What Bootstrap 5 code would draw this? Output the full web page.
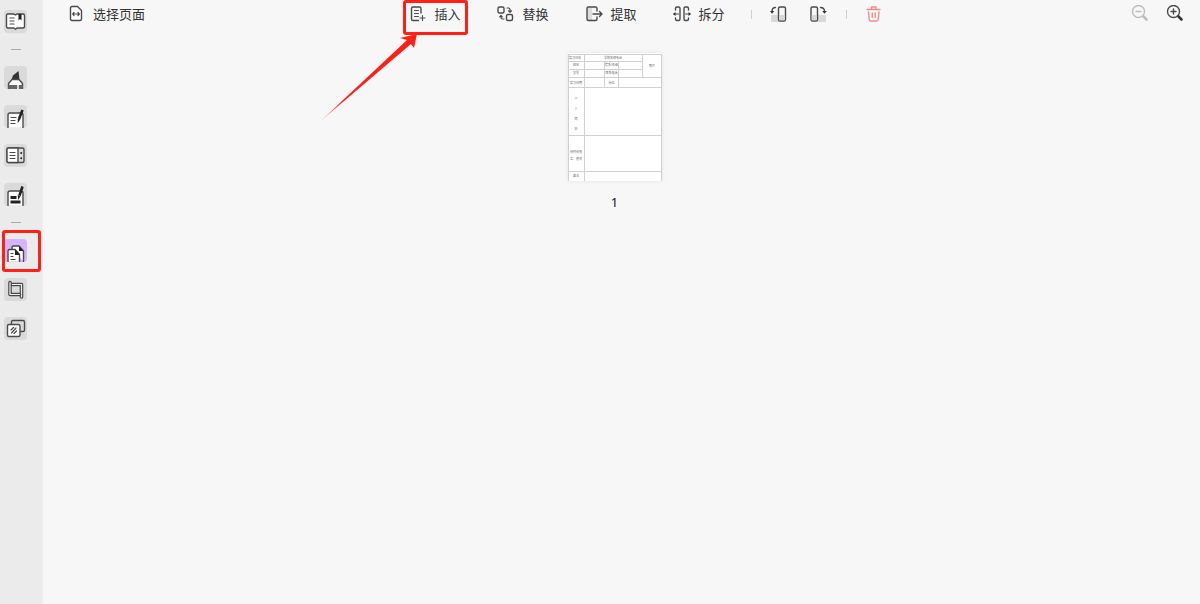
<!DOCTYPE html>
<html lang="zh-CN">
<head>
<meta charset="utf-8">
<meta name="viewport" content="width=device-width, initial-scale=1">
<title>页面管理</title>
<link href="https://cdn.jsdelivr.net/npm/bootstrap@5.3.0/dist/css/bootstrap.min.css" rel="stylesheet">
<style>
body { font-family: "Noto Sans", "Noto Sans CJK SC", sans-serif; background: #f7f7f7; color: #333; font-size: 13px; line-height: 20px; }
svg { display: block; fill: none; stroke: #4a4a4a; stroke-width: 1.4; stroke-linecap: round; stroke-linejoin: round; }
.rail { width: 43px; background: #ebebeb; padding: 10px 0 0 4px; gap: 16px; border-right: 1px solid #efefef; }
.rail button { width: 23px; height: 23px; background: #dadada; border: 0; border-radius: 4px; padding: 0; position: relative; }
.rail button.on { background: #d6b4fc; }
.rail hr { width: 10px; height: 1px; margin: 0 0 0 7px; border: 0; background: #aaa; opacity: 1; }
.bar { height: 28px; padding: 0 16px 0 26px; }
.side { flex: 1 1 0; }
.zooms { gap: 17px; }
.tools { gap: 36px; padding-left: 38px; }
.extra { gap: 18px; margin-left: -10px; }
.tool { position: relative; background: none; border: 0; padding: 0; color: #333; gap: 8px; white-space: nowrap; display: flex; align-items: center; }
.rule { width: 1px; height: 9px; background: #d0d0d0; }
.turn { margin-left: 4px; }
.ring { position: absolute; border: 3px solid #fe2015; border-radius: 3px; pointer-events: none; }
.ring-insert { left: -5px; top: -4px; width: 65px; height: 35px; }
.ring-pages { left: -2px; top: -9px; width: 39px; height: 42px; }
.arrow { position: absolute; left: -91px; top: 26px; pointer-events: none; }
.stage { padding: 25px 14px 0 0; }
.sheet { box-shadow: 0 0 4px #e2e2e2; }
.sheet text { font-size: 3px; fill: #666; stroke: none; text-anchor: middle; }
.danger { stroke: #f78a87; }
.dim { stroke: #bdbdbd; }
.num { margin-top: 11px; color: #111; }
</style>
<script src="https://cdn.jsdelivr.net/npm/bootstrap@5.3.0/dist/js/bootstrap.bundle.min.js"></script>
</head>
<body>
<div class="d-flex min-vh-100">
  <nav class="rail d-flex flex-column flex-shrink-0" aria-label="工具">
    <button type="button" aria-label="阅读"><svg width="23" height="23" viewBox="0 0 23 23"><path fill="#fff" d="M4 4h6l1.500 1 1.500-1h6q1.500 0 1.500 1.500v11q0 1.500-1.500 1.500h-6l-1.500 1.200L10 18H4q-1.500 0-1.500-1.500v-11Q2.500 4 4 4z"/><path stroke-width="1.200" d="M6 8h4M6 11h4M6 14h4"/><path fill="#222" stroke="none" d="M14.500 4h3v6.500L16 9l-1.500 1.500z"/></svg></button>
    <hr>
    <button type="button" aria-label="注释"><svg width="23" height="23" viewBox="0 0 23 23"><path fill="#fff" stroke="none" d="M4.500 23v-5.500l3.500-4h7l3.500 4V23z"/><path fill="#333" stroke="none" d="M7.500 13.500L9 9.500l5.500-4.500 1 8.500z"/><path d="M4.500 22.500v-5l3.500-4h7l3.500 4v5"/><path fill="#666" stroke="none" d="M4.500 19h14v4h-14z"/><path stroke="#fff" stroke-width="1.500" stroke-linecap="butt" d="M14 19v4"/></svg></button>
    <button type="button" aria-label="编辑"><svg width="23" height="23" viewBox="0 0 23 23"><path fill="#fff" d="M4 22.500V10q0-2 2-2h11q2 0 2 2v12.500"/><path stroke-width="1.200" d="M7 12.500h5M7 15.500h4M7 18.500h4"/><path stroke="#222" stroke-width="2.600" stroke-linecap="butt" d="M18.500 5l-3.500 9"/><path fill="#222" stroke="none" d="M13.800 13.500l2.500 1-2.600 3.500z"/></svg></button>
    <button type="button" aria-label="表单"><svg width="23" height="23" viewBox="0 0 23 23"><path fill="#ddd" d="M4.500 4h14q1.500 0 1.500 1.500v11.500q0 1.500-1.500 1.500h-14q-1.500 0-1.500-1.500V5.500q0-1.500 1.500-1.500z"/><path fill="#fff" d="M4.500 4H14v14.500H4.500Q3 18.500 3 17V5.500Q3 4 4.500 4z"/><path stroke-width="1.200" d="M6 8.500h5M6 11.500h5M6 14.500h5"/><path stroke="#222" stroke-width="2" d="M17.200 9v.1M17.200 14.200v.1"/></svg></button>
    <button type="button" aria-label="密文"><svg width="23" height="23" viewBox="0 0 23 23"><path fill="#fff" d="M4 22.500V10q0-2 2-2h11q2 0 2 2v12.500"/><path stroke="#222" stroke-width="2.800" stroke-linecap="butt" d="M6.500 14.500h6M6.500 19h10"/><path stroke="#222" stroke-width="2.600" stroke-linecap="butt" d="M18.500 3.500l-3 9"/><path fill="#222" stroke="none" d="M13.800 12l2.800 1-2.500 4z"/></svg></button>
    <hr>
    <button type="button" class="on" aria-label="页面"><svg width="23" height="23" viewBox="0 0 23 23"><path fill="#fff" d="M8 10V8.500Q8 7 9.500 7H15l4.500 5v10.500"/><path fill="#222" stroke="none" d="M15 7v5h4.500z"/><path fill="#fff" d="M4 22.500V12q0-1.500 1.500-1.500H11l4.500 5v7"/><path fill="#222" stroke="none" d="M11 10v6h5z"/><path stroke-width="1.200" d="M7 14.500h2M7 17.500h2M7 20.500h4"/></svg><span class="ring ring-pages"></span></button>
    <button type="button" aria-label="裁剪"><svg width="23" height="23" viewBox="0 0 23 23"><path stroke-width="3.600" d="M8 6.500h9.500v12.500"/><path stroke="#eee" stroke-width="1.200" d="M8 6.500h9.500v12.500"/><path stroke-width="3.600" d="M6 4.500v12h9.500"/><path stroke="#eee" stroke-width="1.200" d="M6 4.500v12h9.500"/></svg></button>
    <button type="button" aria-label="水印"><svg width="23" height="23" viewBox="0 0 23 23"><rect x="7.500" y="3.500" width="13" height="11" rx="1.500" fill="#ddd"/><rect x="3.500" y="7.500" width="12.500" height="12" rx="1.500" fill="#fff"/><path stroke-width="1.200" d="M7 13l2.500-2.500M7.500 16l4.500-5M10 16.500l2.500-2.500"/></svg></button>
  </nav>

  <main class="flex-grow-1">
    <header class="bar d-flex align-items-center">
      <div class="side d-flex">
        <button type="button" class="tool"><svg width="16" height="18" viewBox="0 0 16 18"><path fill="#fff" d="M3 1.500h5.500L12.500 5.500v8.500q0 1.500-1.500 1.500H3q-1.500 0-1.500-1.500v-11Q1.500 1.500 3 1.500z"/><path stroke-width="1.200" d="M4 9h6.500M5 7.500L3.700 9 5 10.500M9 7.500L10.300 9 9 10.500"/></svg>选择页面</button>
      </div>
      <div class="tools d-flex align-items-center">
        <button type="button" class="tool"><svg width="18" height="18" viewBox="0 0 18 18"><path d="M13 8V3.500Q13 2 11.500 2H5Q3.500 2 3.500 3.500v10.500q0 1.500 1.500 1.500h5.500"/><path stroke-width="1.100" d="M6.500 5.500h4M6.500 8.500h4M6.500 11.500h4M14.500 10.500v5M12 13h5"/></svg>插入<span class="ring ring-insert"></span><svg class="arrow" width="102" height="98" viewBox="0 0 102 98"><defs><linearGradient id="fade" x1="0" y1="1" x2="1" y2="0"><stop offset="0" stop-color="#fe2015" stop-opacity=".2"/><stop offset=".25" stop-color="#fe2015"/></linearGradient></defs><path fill="url(#fade)" stroke="none" d="M2 92.500L90 10l-7-2L100 4l-3 14-3-4z"/></svg></button>
        <button type="button" class="tool"><svg width="18" height="18" viewBox="0 0 18 18"><rect x="2" y="2" width="6" height="6" rx="1.500"/><rect x="10.500" y="9.500" width="6" height="6" rx="1.500"/><path stroke-width="1.200" d="M11 3h1.500q1.500 0 1.500 1.500V7M12.500 5.800L14 7.200l1.500-1.400M5 11v1.500Q5 14 6.500 14H8M3.700 11.800L5 10.500l1.300 1.300"/></svg>替换</button>
        <button type="button" class="tool"><svg width="18" height="18" viewBox="0 0 18 18"><path fill="#ddd" stroke="none" d="M2 3h5v12H2z"/><path d="M12 6V3.500Q12 2 10.500 2H3.500Q2 2 2 3.500v10.500Q2 15.500 3.500 15.500h7q1.500 0 1.500-1.500v-2M8 9h9M14.500 6.500L17 9l-2.500 2.500"/></svg>提取</button>
        <button type="button" class="tool"><svg width="18" height="18" viewBox="0 0 18 18"><path d="M2.500 5V3.500Q2.500 2 4 2h1.500Q7 2 7 3.500v10.500q0 1.500-1.500 1.500H4Q2.500 15.500 2.500 14v-1M15.500 5V3.500Q15.500 2 14 2h-1.500Q11 2 11 3.500v10.500q0 1.500 1.500 1.500H14q1.500 0 1.500-1.500v-1"/><path stroke-width="1.200" d="M1 9h4.500M12.500 9H17"/><path fill="#333" stroke="none" d="M0 9l2.500-2v4zM18 9l-2.500-2v4z"/></svg>拆分</button>
        <div class="extra d-flex align-items-center">
          <span class="rule"></span>
          <button type="button" class="tool" aria-label="向左旋转"><svg width="18" height="18" viewBox="0 0 18 18"><path fill="#d8d8d8" stroke="none" d="M1 10h8v7H2q-1 0-1-1z"/><rect x="8.500" y="2" width="7" height="14" rx="1.500" fill="#f7f7f7"/><path fill="#d8d8d8" stroke="none" d="M9.200 10h5.600v5.300H9.200z"/><path d="M5.500 2.500Q2 2.500 2 6.500"/><path fill="#333" stroke="none" d="M0 6h4.300L2 8.700z"/></svg></button>
          <button type="button" class="tool turn" aria-label="向右旋转"><svg width="18" height="18" viewBox="0 0 18 18"><path fill="#d8d8d8" stroke="none" d="M7 10h9v6q0 1-1 1H7z"/><rect x="1" y="2" width="6.500" height="14" rx="1.500" fill="#f7f7f7"/><path fill="#d8d8d8" stroke="none" d="M1.700 10h5.100v5.300H1.700z"/><path d="M10.500 2.500Q14.500 2.500 14.500 6.500"/><path fill="#333" stroke="none" d="M12.200 6h4.600l-2.300 2.700z"/></svg></button>
          <span class="rule"></span>
          <button type="button" class="tool" aria-label="删除"><svg class="danger" width="18" height="18" viewBox="0 0 18 18"><path d="M2 4.500h13M6.500 4V2H11v2M3.500 7l.7 7.500q.1 1.500 1.500 1.500h6q1.400 0 1.500-1.500L14 7M7.300 8v4.500M10.200 8v4.500"/></svg></button>
        </div>
      </div>
      <div class="side zooms d-flex justify-content-end">
        <button type="button" class="tool" aria-label="缩小"><svg class="dim" width="18" height="18" viewBox="0 0 18 18"><circle cx="7.500" cy="6.500" r="6"/><path d="M5 6.500h5"/><path stroke-width="2.600" d="M12.500 11.500l3 3"/></svg></button>
        <button type="button" class="tool" aria-label="放大"><svg width="18" height="18" viewBox="0 0 18 18"><circle cx="7.500" cy="6.500" r="6"/><path d="M5 6.500h5M7.500 4v5"/><path stroke="#333" stroke-width="2.600" d="M12.500 11.500l3 3"/></svg></button>
      </div>
    </header>
    <section class="stage d-flex flex-column align-items-center">
      <svg class="sheet" width="94" height="128" viewBox="0 0 94 128" role="img" aria-label="第 1 页">
        <path fill="#fff" stroke="none" d="M0 0h94v128H0z"/>
        <path stroke="#d0d0d0" stroke-width="1" stroke-linecap="butt" d="M.5 128V1M93.500 128V1M0 1.500h94M0 8.500h74M0 16.500h74M0 24.500h94M0 34.500h94M0 82.500h94M0 118.500h94M16.500 1v127M36.500 8v26M50.500 8v26M74.500 1v24"/>
        <text x="7" y="6">实习日志</text><text x="45" y="6">学校名称专业</text><text x="84" y="14">照片</text>
        <text x="8" y="13">姓名</text><text x="43.500" y="13">院系/年级</text><text x="8" y="21">学号</text><text x="43.500" y="21">联系电话</text>
        <text x="8" y="31">实习日期</text><text x="43.500" y="31">岗位</text>
        <text x="8" y="47">个</text><text x="8" y="57">人</text><text x="8" y="67">简</text><text x="8" y="77">历</text>
        <text x="8" y="100">何时何地</text><text x="8" y="107">奖、惩况</text><text x="8" y="124">备注</text>
      </svg>
      <div class="num">1</div>
    </section>
  </main>
</div>
</body>
</html>
